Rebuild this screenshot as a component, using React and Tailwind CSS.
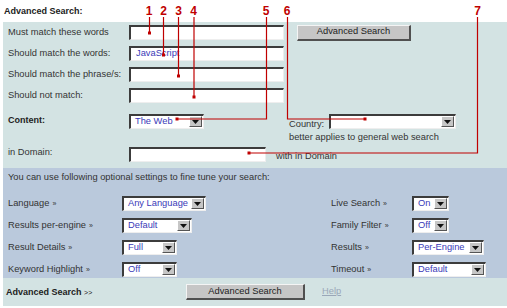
import React from "react";

const FONT = "font-['Liberation_Sans',Arial,sans-serif]";

const Input = ({ w, value }) => (
  <div
    className={`${w} h-[15px] flex items-center bg-white border-t-2 border-l-2 border-t-[#3c3c3c] border-l-[#3c3c3c] border-b border-r border-b-[#eeeeee] border-r-[#eeeeee] pl-[5px] text-[#3a3ab8]`}
  >
    {value}
  </div>
);

const Select = ({ w, value }) => (
  <div
    className={`${w} h-[15px] flex items-stretch bg-white border-t-2 border-l-2 border-t-[#3c3c3c] border-l-[#3c3c3c] border-b border-r border-b-[#eeeeee] border-r-[#eeeeee]`}
  >
    <span className="flex-1 flex items-center pl-[4px] text-[#3a3ab8] whitespace-nowrap">
      {value}
    </span>
    <span className="w-[13px] mr-[1px] mb-[1px] flex items-center justify-center bg-[#c6c6c6] border-t border-l border-t-white border-l-white border-b border-r border-b-[#555] border-r-[#555]">
      <svg width="7" height="4" viewBox="0 0 7 4">
        <path d="M0 0h7L3.5 4z" fill="#111" />
      </svg>
    </span>
  </div>
);

const Button = ({ w, children }) => (
  <div
    className={`${w} h-[16px] flex items-center justify-center bg-[#c6c6c6] text-[#222] border-t border-l border-t-[#f4f4f4] border-l-[#f4f4f4] border-b-2 border-r-2 border-b-[#505050] border-r-[#505050]`}
  >
    {children}
  </div>
);

const Raquo = () => <span className="ml-[3px] text-[7px]">»</span>;

const options = [
  ["Language", "Any Language", "w-[84px]", "Live Search", "On", "w-[37px]"],
  ["Results per-engine", "Default", "w-[70px]", "Family Filter", "Off", "w-[37px]"],
  ["Result Details", "Full", "w-[55px]", "Results", "Per-Engine", "w-[72px]"],
  ["Keyword Highlight", "Off", "w-[55px]", "Timeout", "Default", "w-[74px]"],
];

const Annotations = () => {
  const red = "#c00000";
  const num = (x, n) => (
    <text
      x={x}
      y="15"
      fill={red}
      fontSize="12"
      fontWeight="bold"
      fontFamily="Liberation Sans, Arial, sans-serif"
      textAnchor="middle"
    >
      {n}
    </text>
  );
  const dot = (x, y) => <rect x={x - 1.5} y={y - 1.5} width="3" height="3" fill={red} />;
  return (
    <svg className="absolute inset-0 pointer-events-none" width="507" height="308">
      {num(149, 1)}
      {num(163.5, 2)}
      {num(178.5, 3)}
      {num(193.5, 4)}
      {num(266, 5)}
      {num(287, 6)}
      {num(477.5, 7)}
      <g stroke={red} strokeWidth="1.2" fill="none">
        <path d="M149.5 17V33" />
        <path d="M163.5 17V55" />
        <path d="M178.5 17V76" />
        <path d="M194 17V97" />
        <path d="M266.5 17V119H177" />
        <path d="M287.5 17V119H365" />
        <path d="M477.5 17V153H249" />
      </g>
      {dot(149.5, 33)}
      {dot(163.5, 55)}
      {dot(178.5, 76)}
      {dot(194, 97)}
      {dot(177, 119)}
      {dot(365, 119)}
      {dot(249, 153)}
    </svg>
  );
};

export default function App() {
  return (
    <div className={`relative w-[507px] h-[308px] bg-white text-[#333] text-[9.3px] leading-none ${FONT}`}>
      <div className="h-[22px] pl-[4px] pt-[7px] font-bold text-[9px] text-[#222]">
        Advanced Search:
      </div>

      <div className="ml-[3px]">
        {/* search terms */}
        <div className="h-[146px] bg-[#d3e3e3] pt-[3px] pl-[5px]">
          <div className="flex items-center h-[15px]">
            <span className="w-[121px]">Must match these words</span>
            <Input w="w-[155px]" />
            <div className="ml-[13px]">
              <Button w="w-[114px]">Advanced Search</Button>
            </div>
          </div>
          <div className="flex items-center h-[15px] mt-[6px]">
            <span className="w-[121px]">Should match the words:</span>
            <Input w="w-[155px]" value="JavaScript" />
          </div>
          <div className="flex items-center h-[15px] mt-[6px]">
            <span className="w-[121px]">Should match the phrase/s:</span>
            <Input w="w-[155px]" />
          </div>
          <div className="flex items-center h-[15px] mt-[6px]">
            <span className="w-[121px]">Should not match:</span>
            <Input w="w-[155px]" />
          </div>

          <div className="flex items-start h-[33px] mt-[11px]">
            <span className="w-[121px] h-[13px] flex items-center font-bold text-[9px] text-[#222]">
              Content:
            </span>
            <Select w="w-[75px]" value="The Web" />
            <div className="ml-[85px] flex flex-col">
              <div className="flex items-center">
                <span className="w-[40px] pt-[6px]">Country:</span>
                <Select w="w-[127px]" value="" />
              </div>
              <span className="mt-[4px]">better applies to general web search</span>
            </div>
          </div>

          <div className="flex items-center h-[15px]">
            <span className="w-[121px] -mt-[4px]">in Domain:</span>
            <Input w="w-[137px]" />
            <span className="ml-[10px] mt-[4px]">with in Domain</span>
          </div>
        </div>

        {/* optional settings */}
        <div className="h-[110px] bg-[#bac9dc] pt-[5px] pl-[5px]">
          <div className="h-[9px]">
            You can use following optional settings to fine tune your search:
          </div>
          <div className="mt-[14px] flex flex-col gap-[7px]">
            {options.map(([l1, v1, w1, l2, v2, w2]) => (
              <div key={l1} className="flex items-center h-[15px]">
                <span className="w-[114px]">
                  {l1}
                  <Raquo />
                </span>
                <div className="w-[209px]">
                  <Select w={w1} value={v1} />
                </div>
                <span className="w-[81px]">
                  {l2}
                  <Raquo />
                </span>
                <Select w={w2} value={v2} />
              </div>
            ))}
          </div>
        </div>

        {/* footer */}
        <div className="h-[28px] bg-[#d3e3e3] flex items-center pl-[3px]">
          <span className="w-[180px] font-bold text-[9px] text-[#222]">
            Advanced Search <span className="font-normal text-[7px]">&gt;&gt;</span>
          </span>
          <Button w="w-[119px]">Advanced Search</Button>
          <span className="ml-[17px] text-[#9aa7b8] underline">Help</span>
        </div>
      </div>

      <Annotations />
    </div>
  );
}
